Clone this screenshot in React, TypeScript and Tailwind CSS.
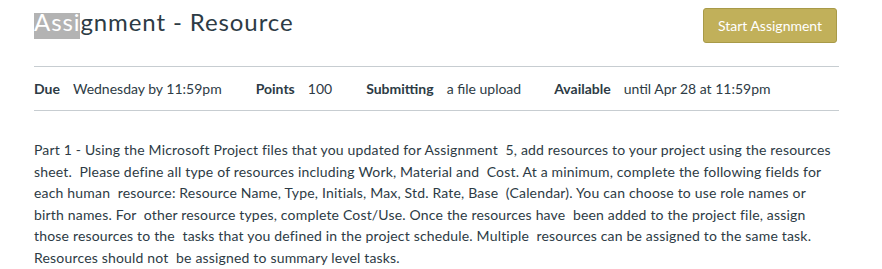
import React from "react";

const S = " \u00a0";

export default function App() {
  return (
    <div
      className="w-[882px] h-[269px] bg-white text-[#2d3b45] overflow-hidden"
      style={{ fontFamily: "Lato, 'Helvetica Neue', Arial, sans-serif" }}
    >
      <div className="ml-[34px] w-[805px]">
        <div className="flex items-start justify-between pt-[8px] pb-[23px] border-b border-[#c7cdd1]">
          <h1 className="text-[24px] leading-[18px] font-normal mt-[5px] tracking-[0.9px]">
            <span className="inline-block bg-[#b3b3b3] text-white leading-[18px] pb-[8px]">Assi</span>gnment - Resource
          </h1>
          <button className="mr-[2px] h-[35px] w-[134px] rounded-[3px] border border-[#a89a48] bg-[#c1b05a] text-white text-[14px]">
            Start Assignment
          </button>
        </div>
        <div className="flex items-center h-[44px] border-b border-[#c7cdd1] text-[14px]">
          <span className="font-bold mr-[13px]">Due</span>
          <span className="mr-[34px]">Wednesday by 11:59pm</span>
          <span className="font-bold mr-[13px]">Points</span>
          <span className="mr-[34px]">100</span>
          <span className="font-bold mr-[13px]">Submitting</span>
          <span className="mr-[33px]">a file upload</span>
          <span className="font-bold mr-[13px]">Available</span>
          <span>until Apr 28 at 11:59pm</span>
        </div>
        <p className="mt-[28px] text-[14px] leading-[21.5px] tracking-[0.18px] whitespace-nowrap">
          Part 1 - Using the Microsoft Project files that you updated for Assignment{S}5, add resources to your project using the resources
          <br />
          sheet.{S}Please define all type of resources including Work, Material and{S}Cost. At a minimum, complete the following fields for
          <br />
          each human{S}resource: Resource Name, Type, Initials, Max, Std. Rate, Base{S}(Calendar). You can choose to use role names or
          <br />
          birth names. For{S}other resource types, complete Cost/Use. Once the resources have{S}been added to the project file, assign
          <br />
          those resources to the{S}tasks that you defined in the project schedule. Multiple{S}resources can be assigned to the same task.
          <br />
          Resources should not{S}be assigned to summary level tasks.
        </p>
      </div>
    </div>
  );
}
